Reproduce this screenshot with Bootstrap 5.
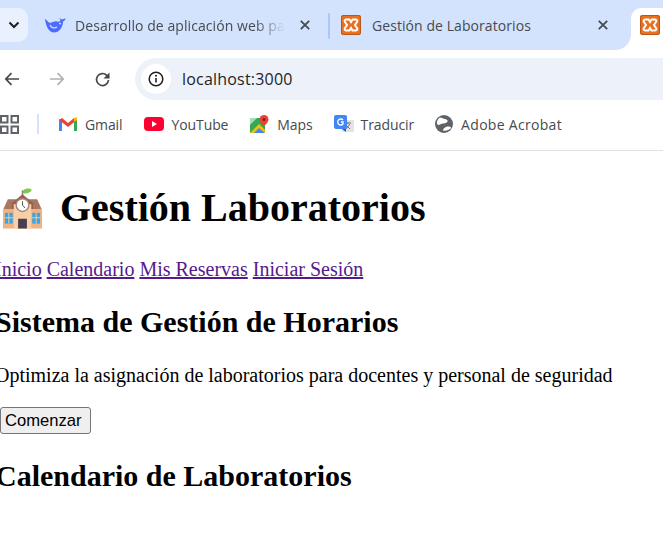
<!DOCTYPE html>
<html lang="es"><head><meta charset="utf-8"><title>Gestión Laboratorios</title>
<link href="https://cdn.jsdelivr.net/npm/bootstrap@5.3.0/dist/css/bootstrap.min.css" rel="stylesheet">
<style>
html,body{height:557px;overflow:hidden;background:#fff}
body{font-family:"Liberation Serif",serif;color:#000;width:663px}
.ui{font-family:"Open Sans","Noto Sans",sans-serif}
.tabstrip{height:50px;background:#d3e3fd;overflow:hidden}
.menu-chip{width:28px;height:34px;margin-top:8px;background:#e9f1fe;border-radius:0 10px 10px 0;flex:none}
.tab{height:50px;flex:none;color:#474a4f;font-size:14px;letter-spacing:.07px;white-space:nowrap}
.tab-one{width:282px;padding-left:17px}
.tab-title{overflow:hidden;width:210px;margin-left:9px;-webkit-mask-image:linear-gradient(90deg,#000 86%,transparent)}
.tab-sep{width:2px;height:26px;background:#a8c7fa;margin-left:18px;margin-top:1px;flex:none;border-radius:1px}
.tab-two{width:301px;padding-left:11px;position:relative}
.tab-two::after{content:"";position:absolute;right:0;bottom:0;width:15px;height:15px;background:radial-gradient(circle at 0 0,transparent 14.500px,#fff 15px)}
.tab-two .tab-name{margin-left:11px;width:226px}
.tab-active{flex:1;height:42px;margin-top:8px;background:#fff;border-radius:10px 0 0 0;padding:7px 0 0 9px}
.toolbar{height:50px;padding:8px 0 0 4px}
.omni{flex:1;margin-left:24px;height:42px;background:#edf2fa;border-radius:21px 0 0 21px;padding-left:6px;font-size:16px;color:#1f1f1f;letter-spacing:.2px}
.omni-i{width:30px;height:30px;background:#fff;border-radius:50%;margin-right:11px}
.bookmarks{height:51px;border-bottom:1px solid #e2e2e2;font-size:14px;color:#474a4f;letter-spacing:-.1px;padding-bottom:2px}
.bm-sep{width:2px;height:20px;background:#d3e3fd;margin:0 20px 0 18px}
.bm{margin-right:21px}
.bm svg{margin-right:8px}
.bm-tight svg{margin-right:7px}
.bm-yt{margin-right:22px}
.bm-wide{letter-spacing:.3px}
.page{margin-left:-5px;white-space:nowrap}
.page-title{font-family:"Liberation Serif",serif;font-size:40px;font-weight:700;line-height:46px;margin:34px 0 0 7px;display:flex;align-items:center}
.page-title svg{margin-right:17px}
.page-nav{font-size:20px;line-height:23px;margin-top:27px}
.page-nav a{color:#551a8b}
.page-h2{font-family:"Liberation Serif",serif;font-size:30px;font-weight:700;line-height:34px;margin:24px 0 0}
.page-p{font-size:20px;line-height:23px;margin:25px 0 0}
.start{font-family:"Liberation Sans",sans-serif;font-size:16.600px;line-height:19px;margin:20px 0 0 5px;padding:3px 8px 3px 4px;background:#efefef;border:1px solid #767676;border-radius:3px;color:#000;display:block}
.start+.page-h2{margin-top:25px}
</style></head><body>
<div class="tabstrip d-flex ui">
 <div class="menu-chip d-flex align-items-center justify-content-center"><svg width="12" height="8" viewBox="0 0 12 8"><path d="M1.500 1.500 6 6l4.500-4.500" fill="none" stroke="#1f1f1f" stroke-width="2"/></svg></div>
 <div class="tab tab-one d-flex align-items-center">
  <svg width="21" height="16" viewBox="0 0 21 16"><path d="M0 2c2 .5 2.500 3 4 3.500 3 1 5-2 8-1 2 .5 3 0 3.500-1.500L14 1l3 1.500L20 1.500l.500 1c-1 1-2 1.500-2.500 2.500-.500 6-4 10.500-9 10.500C4 15.500 1 10 0 2z" fill="#4d6bfe"/><path d="M5 8c1 2.500 4 4 7 2" stroke="#d3e3fd" stroke-width="1.300" fill="none"/><circle cx="15" cy="6.500" r="1" fill="#d3e3fd"/></svg>
  <div class="tab-title">Desarrollo de aplicación web para</div>
  <svg class="ms-auto" width="10" height="10" viewBox="0 0 10 10"><path d="M.8.8l8.400 8.400M9.200.8.8 9.200" stroke="#474a4f" stroke-width="1.800"/></svg>
 </div>
 <div class="tab-sep align-self-center"></div>
 <div class="tab tab-two d-flex align-items-center">
  <svg width="20" height="20" viewBox="0 0 20 20"><rect width="20" height="20" rx="2" fill="#e8701f"/><rect x=".5" y=".5" width="19" height="19" rx="2" fill="none" stroke="#b9571a"/><path d="M5 4.500h3.500L10 7l1.500-2.500H15a1.500 1.500 0 0 1 1 2.500l-2 3 2 3a1.500 1.500 0 0 1-1 2.500h-3.500L10 13l-1.500 2.500H5a1.500 1.500 0 0 1-1-2.500l2-3-2-3a1.500 1.500 0 0 1 1-2.500z" fill="none" stroke="#fff" stroke-width="2"/></svg>
  <div class="tab-name">Gestión de Laboratorios</div>
  <svg width="10" height="10" viewBox="0 0 10 10"><path d="M.8.8l8.400 8.400M9.200.8.8 9.200" stroke="#474a4f" stroke-width="1.800"/></svg>
 </div>
 <div class="tab-active"><svg class="d-block" width="20" height="20" viewBox="0 0 20 20"><rect width="20" height="20" rx="2" fill="#e8701f"/><rect x=".5" y=".5" width="19" height="19" rx="2" fill="none" stroke="#b9571a"/><path d="M5 4.500h3.500L10 7l1.500-2.500H15a1.500 1.500 0 0 1 1 2.500l-2 3 2 3a1.500 1.500 0 0 1-1 2.500h-3.500L10 13l-1.500 2.500H5a1.500 1.500 0 0 1-1-2.500l2-3-2-3a1.500 1.500 0 0 1 1-2.500z" fill="none" stroke="#fff" stroke-width="2"/></svg></div>
</div>
<div class="toolbar d-flex align-items-center ui">
 <svg width="16" height="14" viewBox="0 0 16 14"><path d="M15 7H2M7.500 1.200 1.800 7l5.700 5.800" fill="none" stroke="#474747" stroke-width="1.700"/></svg>
 <svg style="margin-left:29px" width="16" height="14" viewBox="0 0 16 14"><path d="M1 7h13M8.500 1.200 14.200 7l-5.700 5.800" fill="none" stroke="#b0b0b0" stroke-width="1.700"/></svg>
 <svg style="margin-left:29px" width="17" height="17" viewBox="0 0 17 17"><path d="M14.500 9a6 6 0 1 1-1.700-4.700L15 6.500" fill="none" stroke="#474747" stroke-width="1.700"/><path d="M15.500 1.500v6h-6z" fill="#474747"/></svg>
 <div class="omni d-flex align-items-center">
  <div class="omni-i d-flex align-items-center justify-content-center"><svg width="16" height="16" viewBox="0 0 16 16"><circle cx="8" cy="8" r="6.800" fill="none" stroke="#1f1f1f" stroke-width="1.500"/><path d="M8 7v4.500" stroke="#1f1f1f" stroke-width="1.600"/><circle cx="8" cy="4.800" r="1" fill="#1f1f1f"/></svg></div>
  <span>localhost:3000</span>
 </div>
</div>
<div class="bookmarks d-flex align-items-center ui">
 <svg width="19" height="19" viewBox="0 0 19 19" fill="none" stroke="#5f6368" stroke-width="2"><rect x="1" y="1" width="6.500" height="6.500"/><rect x="11.500" y="1" width="6.500" height="6.500"/><rect x="1" y="11.500" width="6.500" height="6.500"/><rect x="11.500" y="11.500" width="6.500" height="6.500"/></svg>
 <div class="bm-sep"></div>
 <div class="bm d-flex align-items-center"><svg width="18" height="14" viewBox="0 0 18 14"><path d="M0 14V2l3 1v11z" fill="#4285f4"/><path d="M18 14V2l-3 1v11z" fill="#34a853"/><path d="M0 3l3-2 6 5 6-5 3 2-9 7z" fill="#ea4335"/><path d="M15 1l3-1v3l-3 2z" fill="#fbbc04"/></svg>Gmail</div>
 <div class="bm bm-yt d-flex align-items-center"><svg width="20" height="14" viewBox="0 0 20 14"><rect width="20" height="14" rx="4" fill="#ff0033"/><path d="M8 4v6l5-3z" fill="#fff"/></svg>YouTube</div>
 <div class="bm d-flex align-items-center"><svg width="19" height="19" viewBox="0 0 19 19"><path d="M0 3h15v15H0z" fill="#34a853"/><path d="M0 18 9 9l6 6v3z" fill="#fbbc04"/><path d="M4 18l5-5 6 5z" fill="#4285f4"/><path d="M0 3h7L0 10z" fill="#a8dab5"/><path d="M14 0a4.500 4.500 0 0 1 4.500 4.500C18.500 7.500 14 11 14 11S9.500 7.500 9.500 4.500A4.500 4.500 0 0 1 14 0z" fill="#ea4335"/><circle cx="14" cy="4.500" r="1.500" fill="#8a1c14"/></svg>Maps</div>
 <div class="bm bm-tight d-flex align-items-center"><svg width="20" height="20" viewBox="0 0 20 20"><rect x="8" y="6" width="12" height="12" rx="1" fill="#e3e3e3"/><path d="M11 9h6M14 8v2M12 15l4-5M12 11l4 4" stroke="#777" stroke-width="1" fill="none"/><path d="M2 1h9a2 2 0 0 1 2 2v10a2 2 0 0 1-2 2H2a2 2 0 0 1-2-2V3a2 2 0 0 1 2-2z" fill="#4285f4"/><path d="M8 15h4v3z" fill="#2a56c6"/><path d="M9 6a3 3 0 1 0 0 4V8H7" stroke="#fff" stroke-width="1.300" fill="none"/></svg>Traducir</div>
 <div class="bm bm-wide d-flex align-items-center"><svg width="18" height="18" viewBox="0 0 18 18"><circle cx="9" cy="9" r="9" fill="#5f6368"/><path d="M5 2.500c2 1 6 1 7.500 3 1 1.500-2 3-4.500 3s-4 2.500-5.500 1C1 8 2.500 4 5 2.500zM8 15.500c0-2 3-4 5-4s3 .5 3 1.500c-1 1.500-5 3.500-8 2.500z" fill="#fff"/></svg>Adobe Acrobat</div>
</div>
<main class="page">
 <h1 class="page-title"><svg width="41" height="41" viewBox="2 2 42 41"><path d="M23 13V4" stroke="#8a7a70" stroke-width="1.500"/><path d="M23.500 4c3-2.500 7-2.500 9-.5-1.500 3-6 4.500-9 3z" fill="#7ec84a"/><path d="M3 24l5-11h30l5 11z" fill="#a97762"/><path d="M12 17l11-9 11 9v6H12z" fill="#96604f"/><rect x="3" y="23" width="40" height="20" fill="#eeb283"/><rect x="14" y="18" width="18" height="25" fill="#f9d0a6"/><circle cx="23" cy="19" r="6.500" fill="#fff" stroke="#a9867a" stroke-width="1.500"/><path d="M23 15v4l2.500 3" stroke="#555" fill="none"/><rect x="5" y="27" width="8" height="11" fill="#3ba5e0"/><rect x="33" y="27" width="8" height="11" fill="#3ba5e0"/><path d="M9 27v11M5 32h8M37 27v11M33 32h8" stroke="#f7cb9f"/><rect x="18.500" y="33" width="9" height="10" fill="#4a3d52"/></svg><span>Gestión Laboratorios</span></h1>
 <nav class="page-nav"><a href="#">Inicio</a> <a href="#">Calendario</a> <a href="#">Mis Reservas</a> <a href="#">Iniciar Sesión</a></nav>
 <h2 class="page-h2">Sistema de Gestión de Horarios</h2>
 <p class="page-p">Optimiza la asignación de laboratorios para docentes y personal de seguridad</p>
 <button class="start" type="button">Comenzar</button>
 <h2 class="page-h2">Calendario de Laboratorios</h2>
</main>
</body></html>
